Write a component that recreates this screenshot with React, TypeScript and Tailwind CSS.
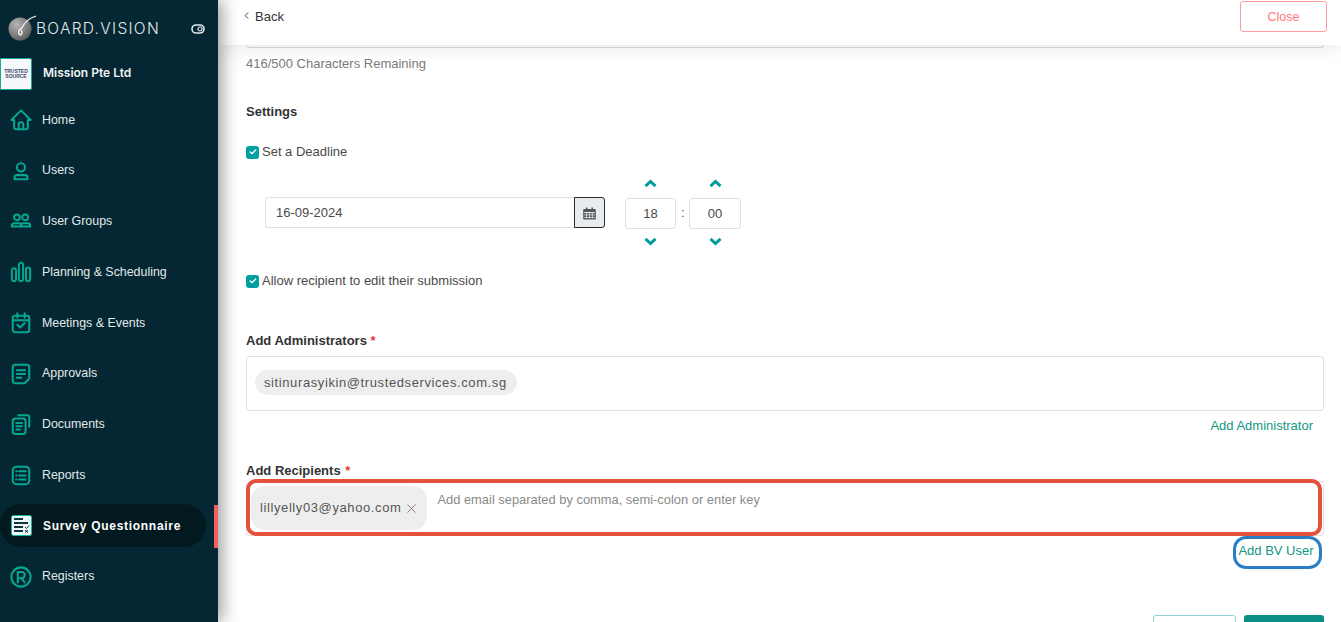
import React from 'react';
import { ChevronLeft, X, Check } from 'lucide-react';

const iconProps = {
  width: 24,
  height: 24,
  viewBox: '0 0 24 24',
  fill: 'none',
  stroke: '#05a88d',
  strokeWidth: 2.2,
  strokeLinecap: 'round' as const,
  strokeLinejoin: 'round' as const,
};

const HomeIcon = () => (
  <svg {...iconProps}>
    <path d="M1.500 12 12 1.500 22.500 12H19.500V20a2 2 0 0 1-2 2H6.500a2 2 0 0 1-2-2V12Z" />
    <path d="M9.500 22v-5a2.500 2.500 0 0 1 5 0v5" />
  </svg>
);

const UserIcon = () => (
  <svg {...iconProps}>
    <circle cx="12" cy="8" r="4.500" />
    <path d="M5 21v-2a2.500 2.500 0 0 1 2.500-2.500h9A2.500 2.500 0 0 1 19 19v2Z" />
  </svg>
);

const GroupIcon = () => (
  <svg {...iconProps}>
    <circle cx="7.500" cy="8" r="3.200" />
    <circle cx="16.500" cy="8" r="3.200" />
    <path d="M2 18v-1a2.500 2.500 0 0 1 2.500-2.500h6A2.500 2.500 0 0 1 12 17v1Z" />
    <path d="M12 18v-1a2.500 2.500 0 0 1 2.500-2.500h5A2.500 2.500 0 0 1 22 17v1Z" />
  </svg>
);

const PlanningIcon = () => (
  <svg {...iconProps}>
    <rect x="2" y="8" width="4.600" height="14" rx="2.300" />
    <rect x="9.700" y="2" width="4.600" height="20" rx="2.300" />
    <rect x="17.400" y="7" width="4.600" height="15" rx="2.300" />
  </svg>
);

const MeetingIcon = () => (
  <svg {...iconProps}>
    <rect x="3" y="4" width="18" height="18" rx="2.500" />
    <path d="M3 9h18M8 1.500V6M16 1.500V6" />
    <path d="m8 14 3 3 5-5" />
  </svg>
);

const ApprovalIcon = () => (
  <svg {...iconProps}>
    <path d="M5.500 2h13A2.500 2.500 0 0 1 21 4.500V17l-5 5H5.500A2.500 2.500 0 0 1 3 19.500v-15A2.500 2.500 0 0 1 5.500 2Z" />
    <path d="M7.500 8h9M7.500 12h9M7.500 16h5" />
  </svg>
);

const DocumentIcon = () => (
  <svg {...iconProps}>
    <path d="M9 2.500h10a2 2 0 0 1 2 2V15" />
    <rect x="3" y="6" width="14" height="17" rx="3" />
    <path d="M7 11h6M7 14.500h6M7 18h3.500" />
  </svg>
);

const ReportIcon = () => (
  <svg {...iconProps}>
    <rect x="3" y="3" width="18" height="19" rx="4" />
    <path d="M10 8h7M10 12.500h7M10 17h7M6.800 8h.4M6.800 12.500h.4M6.800 17h.4" />
  </svg>
);

const SurveyIcon = () => (
  <svg width="21" height="21" viewBox="0 0 21 21" fill="none">
    <rect x="0.500" y="0.500" width="20" height="20" rx="2" fill="#eefaf7" stroke="#19b39b" />
    <path d="M3 4h9M3 8h14M3 12h9M3 16h9" stroke="#10343f" strokeWidth="1.800" />
    <path d="m14 12 1.500 1.500 2.500-3M14 15l3 2.500M17 15l-3 2.500" stroke="#10343f" strokeWidth="1" />
  </svg>
);

const RegisterIcon = () => (
  <svg {...iconProps}>
    <circle cx="12" cy="12" r="10.500" />
    <path d="M8.500 18V6.500h4.200a3.400 3.400 0 0 1 0 6.800H8.500M12.500 13.300 16 18" />
  </svg>
);

const navItems = [
  { label: 'Home', icon: <HomeIcon /> },
  { label: 'Users', icon: <UserIcon /> },
  { label: 'User Groups', icon: <GroupIcon /> },
  { label: 'Planning & Scheduling', icon: <PlanningIcon /> },
  { label: 'Meetings & Events', icon: <MeetingIcon /> },
  { label: 'Approvals', icon: <ApprovalIcon /> },
  { label: 'Documents', icon: <DocumentIcon /> },
  { label: 'Reports', icon: <ReportIcon /> },
  { label: 'Survey Questionnaire', icon: <SurveyIcon />, active: true },
  { label: 'Registers', icon: <RegisterIcon /> },
];

function Logo() {
  return (
    <svg width="28" height="26" viewBox="0 0 28 26" fill="none">
      <defs>
        <radialGradient id="logoDisc" cx="0.35" cy="0.3" r="0.9">
          <stop offset="0" stopColor="#b5b5b5" />
          <stop offset="1" stopColor="#4c4c4c" />
        </radialGradient>
      </defs>
      <circle cx="12" cy="14" r="11.500" fill="url(#logoDisc)" />
      <path d="M28 1C21 3 16 8 14 13" stroke="#e8e8e8" strokeWidth="1.300" />
      <path d="M14 13c-3 1-4 4-3 6 1 1.500 3 1 3-1s-1-3-1-3" stroke="#f2f2f2" strokeWidth="1.400" />
    </svg>
  );
}

function EyeToggle() {
  return (
    <svg width="14" height="10" viewBox="0 0 14 10" fill="none" className="ml-[31px] mt-[9px]">
      <rect x="1" y="1" width="12" height="8" rx="4" stroke="#e4eaec" strokeWidth="1.600" />
      <circle cx="9" cy="5" r="2" stroke="#e4eaec" strokeWidth="1.200" />
    </svg>
  );
}

function CalendarGlyph() {
  return (
    <svg width="13" height="14" viewBox="0 0 13 14" fill="#555">
      <path d="M1 3h2V1.500h1.500V3h4V1.500H10V3h2a.8.800 0 0 1 .8.800v9a.8.800 0 0 1-.8.800H1a.8.800 0 0 1-.8-.8v-9A.8.800 0 0 1 1 3Z" />
      <path d="M1.200 6h10.600v1H1.200ZM1.200 8.500h10.600v.7H1.200ZM1.200 11h10.600v.7H1.200ZM3.300 6h.7v6.500h-.7ZM6.100 6h.7v6.500h-.7ZM8.900 6h.7v6.500h-.7Z" fill="#e9ecef" />
    </svg>
  );
}

function Sidebar() {
  return (
    <aside className="relative z-10 flex h-full w-[218px] shrink-0 flex-col bg-[#042733] shadow-[4px_0_16px_rgba(0,0,0,0.4)]">
      <div className="flex h-[58px] shrink-0 items-start pl-[8px] pt-[15px]">
        <Logo />
        <span className="mt-[5px] w-[124px] font-['Inter'] text-[15.500px] font-light leading-[18px] tracking-[1.300px] text-[#e4eaec]">
          BOARD.VISION
        </span>
        <EyeToggle />
      </div>
      <div className="flex h-[32px] shrink-0 items-center">
        <div className="flex h-[32px] w-[32px] flex-col items-center justify-center rounded-r-[2px] border border-[#1aa98f] bg-[#f6f8fb] text-[5px] font-semibold leading-[5px] text-[#3b4a6b]">
          <span>TRUSTED</span>
          <span>SOURCE</span>
        </div>
        <span className="ml-[11px] mt-[-2px] font-['Inter'] text-[12px] font-semibold text-[#f1f4f5]">Mission Pte Ltd</span>
      </div>
      <nav className="flex flex-col pt-[4.500px]">
        {navItems.map((item) => (
          <div key={item.label} className="relative flex h-[50.750px] items-center">
            {item.active ? (
              <>
                <div className="flex h-[43px] w-[206px] items-center rounded-full bg-[#021920] pl-[11px]">
                  {item.icon}
                  <span className="ml-[11px] text-[12px] font-bold tracking-[0.7px] text-white">{item.label}</span>
                </div>
                <span className="absolute right-0 top-[4px] h-[43px] w-[4px] bg-[#f4605f]" />
              </>
            ) : (
              <>
                <span className="flex w-[42px] shrink-0 justify-center [&>svg]:ml-[-1px] [&>svg]:h-[22px] [&>svg]:w-[22px]">{item.icon}</span>
                <span className="text-[12.400px] text-[#e3e9ea]">{item.label}</span>
              </>
            )}
          </div>
        ))}
      </nav>
    </aside>
  );
}

function Checkbox({ label }: { label: string }) {
  return (
    <label className="flex items-center text-[13px] leading-[18px] text-[#4a4a4a]">
      <span className="flex h-[13px] w-[13px] items-center justify-center rounded-[3px] bg-[#00a0a0]">
        <Check size={8} strokeWidth={4} color="#fff" />
      </span>
      <span className="ml-[3px]">{label}</span>
    </label>
  );
}

function Chevron({ up }: { up?: boolean }) {
  return (
    <svg width="13" height="9" viewBox="0 0 13 9" fill="none">
      <path d={up ? 'M1.500 7.200 6.500 2.500 11.500 7.200' : 'M1.500 1.800 6.500 6.500 11.500 1.800'} stroke="#009c9c" strokeWidth="3" />
    </svg>
  );
}

function TimeField({ value, width }: { value: string; width: string }) {
  return (
    <div className="flex flex-col items-center">
      <Chevron up />
      <div className={`mb-[8px] mt-[10px] flex h-[31px] ${width} items-center justify-center rounded-[3px] border border-[#dde1e4] text-[13px] text-[#4a4a4a]`}>
        {value}
      </div>
      <Chevron />
    </div>
  );
}

export default function App() {
  return (
    <div className="flex h-[622px] w-full overflow-hidden bg-white font-['Liberation_Sans',Arial,sans-serif]">
      <Sidebar />
      <main className="flex min-w-0 flex-1 flex-col">
        {/* Top bar */}
        <header className="relative z-[5] flex h-[45px] shrink-0 items-start justify-between bg-white pl-[23px] pr-[14px] shadow-[0_1px_22px_rgba(0,0,0,0.11)]">
          <div className="mt-[7px] flex items-center text-[13px] text-[#333]">
            <ChevronLeft size={11} strokeWidth={2} className="mr-[3px] mt-[-3px]" />
            Back
          </div>
          <button className="mt-[1px] h-[31px] w-[87px] rounded-[3px] border border-[#ff9a9d] pt-[1px] text-[12.500px] text-[#ff777a]">Close</button>
        </header>

        <div className="relative flex-1 overflow-hidden pl-[28px] pr-[17px]">
          <div className="relative h-[3px] rounded-b-[4px] border-x border-b border-[#d9dcdf]" />
          <p className="mt-[8px] text-[13px] leading-[15px] text-[#7b7b7b]">416/500 Characters Remaining</p>

          <h2 className="mt-[34px] text-[13px] font-bold leading-[14px] text-[#333]">Settings</h2>
          <div className="mt-[24px]">
            <Checkbox label="Set a Deadline" />
          </div>

          <div className="ml-[19px] mt-[18px] flex items-center">
            <div className="flex h-[31px] w-[340px]">
              <div className="flex flex-1 items-center rounded-l-[3px] border border-r-0 border-[#dde1e4] pl-[10px] text-[13px] text-[#4a4a4a]">16-09-2024</div>
              <div className="flex w-[31px] items-center justify-center rounded-r-[3px] border border-[#2b2b2b] bg-[#e9ecef]">
                <CalendarGlyph />
              </div>
            </div>
            <div className="ml-[20px] flex items-center">
              <TimeField value="18" width="w-[51px]" />
              <span className="mx-[5px] w-[3px] text-center text-[13px] text-[#555]">:</span>
              <TimeField value="00" width="w-[52px]" />
            </div>
          </div>

          <div className="mt-[26px]">
            <Checkbox label="Allow recipient to edit their submission" />
          </div>

          <h3 className="mt-[43px] text-[13px] font-bold leading-[15px] text-[#333]">
            Add Administrators <span className="text-[#e53935]">*</span>
          </h3>
          <div className="mt-[8px] flex h-[55px] items-start rounded-[3px] border border-[#dde1e4] pl-[8px] pt-[13px]">
            <span className="flex h-[25px] items-center rounded-full bg-[#eeeeee] pl-[9px] pr-[10px] text-[13px] tracking-[0.6px] text-[#555]">
              sitinurasyikin@trustedservices.com.sg
            </span>
          </div>
          <div className="mt-[8px] flex justify-end pr-[11px] text-[13px] leading-[14px] text-[#12977f]">Add Administrator</div>

          <h3 className="mt-[30px] text-[13px] font-bold leading-[15px] text-[#333]">
            Add Recipients <span className="ml-[1px] text-[#e53935]">*</span>
          </h3>
          <div className="relative mt-[3px] flex h-[55px] items-start rounded-[3px] border border-[#dde1e4] pl-[4px] pt-[4px]">
            <span className="flex h-[44px] items-center rounded-[14px] bg-[#eeeeee] pl-[9px] pr-[8px] text-[13px] tracking-[0.6px] text-[#555]">
              lillyelly03@yahoo.com
              <X size={15} strokeWidth={1.100} className="ml-[3px]" />
            </span>
            <span className="ml-[10px] mt-[4px] text-[12.900px] leading-[19px] text-[#8a8a8a]">Add email separated by comma, semi-colon or enter key</span>
            {/* annotation drawn over the recipients box */}
            <span className="absolute left-[-1px] right-[1px] top-[-3px] bottom-[-1px] rounded-[10px] border-[4px] border-[#e4513c]" />
          </div>
          <div className="flex justify-end pr-[2px]">
            <span className="flex h-[33px] w-[89px] items-center justify-center rounded-[13px] border-[3px] border-[#2a7fc4] pb-[3px] pr-[3px] text-[13px] text-[#12977f]">
              Add BV User
            </span>
          </div>

          <div className="mt-[46px] flex justify-end gap-[8px]">
            <button className="h-[32px] w-[83px] rounded-[3px] border border-[#8fd0d0] bg-white" />
            <button className="h-[32px] w-[80px] rounded-[3px] bg-[#0a8f86]" />
          </div>
        </div>
      </main>
    </div>
  );
}
